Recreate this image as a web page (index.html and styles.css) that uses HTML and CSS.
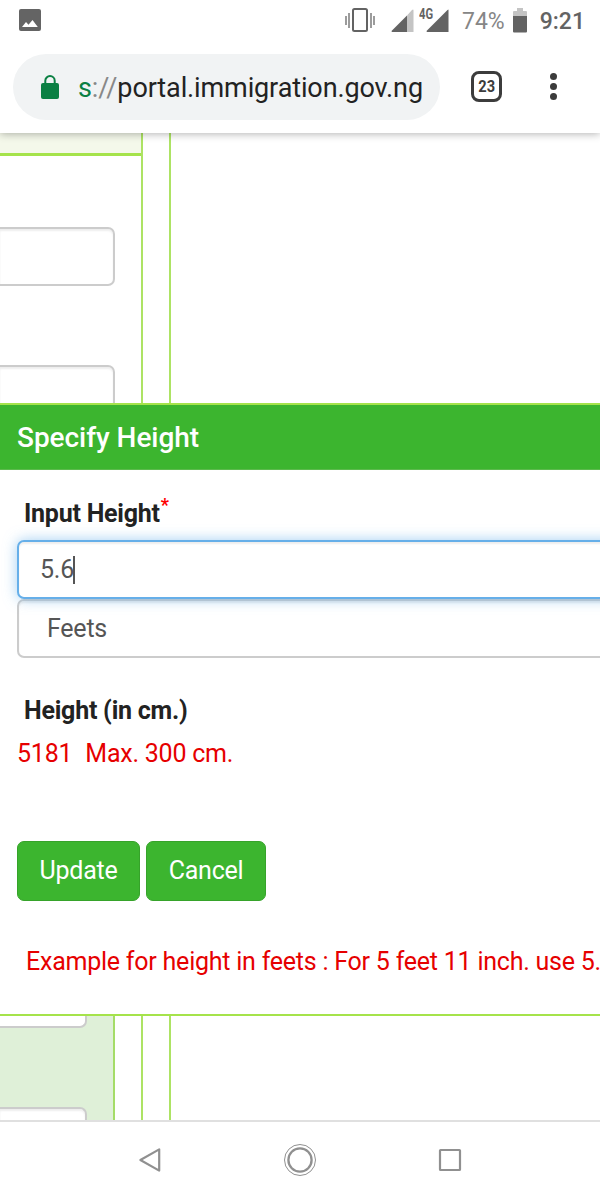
FILE: index.html
```html
<!DOCTYPE html>
<html lang="en">

<head>
    <meta charset="UTF-8">
    <meta name="viewport" content="width=device-width, initial-scale=1.0">
    <title>Specify Height</title>
    <link rel="stylesheet" href="styles.css">
</head>

<body>
    <div class="status-bar">
        <svg class="icon-picture" width="22" height="22" viewBox="0 0 22 22">
            <rect width="22" height="22" rx="2" fill="#646464" />
            <path d="M3 18L7 13L9.5 15.7L13.5 11L18.8 18Z" fill="#fff" />
        </svg>
        <svg class="icon-vibrate" width="30" height="26" viewBox="0 0 30 26">
            <rect x="8" y="2" width="14" height="22" rx="1.5" fill="none" stroke="#636363" stroke-width="2" />
            <path d="M1 9V18M4 6V21M26 6V21M29 9V18" stroke="#737373" stroke-width="1.4" />
        </svg>
        <svg class="icon-signal" width="23" height="23" viewBox="0 0 23 23">
            <path d="M16 6.5L21 1Q22.5 0 22.5 1.5V23H16Z" fill="#c4c4c4" />
            <path d="M16 6.5V23H1Q0 22.5 1 21.5Z" fill="#636363" />
        </svg>
        <span class="network">4G</span>
        <svg class="icon-signal-full" width="23" height="23" viewBox="0 0 23 23">
            <path d="M22.5 1Q22.5 0 21.5 1L1 21.5Q0 22.5 1 23H22.5Z" fill="#636363" />
        </svg>
        <span class="percent">74%</span>
        <svg class="icon-battery" width="14" height="25" viewBox="0 0 14 25">
            <path d="M0 9V4Q0 3 1 3H4V0H10V3H13Q14 3 14 4V9Z" fill="#c4c4c4" />
            <path d="M0 8H14V23.5Q14 24.5 13 24.5H1Q0 24.5 0 23.5Z" fill="#636363" />
        </svg>
        <span class="clock">9:21</span>
    </div>

    <div class="toolbar">
        <div class="url-box">
            <svg class="icon-lock" width="18" height="24" viewBox="0 0 18 24">
                <path d="M4.3 10V5.8A4.7 4.7 0 0 1 13.7 5.8V10" fill="none" stroke="#0b8043" stroke-width="2" />
                <rect y="8" width="18" height="16" rx="2" fill="#0b8043" />
            </svg>
            <div class="url"><span class="scheme">s</span><span class="slashes">://</span>portal.immigration.gov.ng</div>
        </div>
        <div class="tabs"><span>23</span></div>
        <div class="more"><i></i><i></i><i></i></div>
    </div>

    <div class="page">
        <div class="back-top">
            <div class="form-col">
                <div class="form-head"></div>
                <div class="field"></div>
                <div class="field"></div>
            </div>
            <div class="gutter"></div>
        </div>

        <div class="modal">
            <div class="modal-title">Specify Height</div>
            <div class="modal-body">
                <label class="label">Input Height<span class="star">*</span></label>
                <div class="input focus">5.6<span class="caret"></span></div>
                <div class="input select">Feets</div>
                <label class="label label-cm">Height (in cm.)</label>
                <div class="result"><span>5181</span><span>Max. 300 cm.</span></div>
                <div class="btn-box">
                    <button class="btn-update">Update</button>
                    <button class="btn-cancel">Cancel</button>
                </div>
                <p class="example">Example for height in feets : For 5 feet 11 inch. use 5.</p>
            </div>
        </div>

        <div class="back-bottom">
            <div class="green-col">
                <div class="field field-end"></div>
                <div class="field field-start"></div>
            </div>
            <div class="gutter"></div>
            <div class="gutter"></div>
        </div>
    </div>

    <div class="nav-bar">
        <svg width="28" height="28" viewBox="0 0 28 28">
            <path d="M4.4 14L23.2 3.4V24.6Z" fill="none" stroke="#909090" stroke-width="2.2" stroke-linejoin="round" />
        </svg>
        <svg width="34" height="34" viewBox="0 0 34 34">
            <circle cx="17" cy="17" r="15.5" fill="none" stroke="#909090" stroke-width="1" />
            <circle cx="17" cy="17" r="11.6" fill="none" stroke="#909090" stroke-width="2.3" />
        </svg>
        <svg width="28" height="28" viewBox="0 0 28 28">
            <rect x="4" y="4" width="20" height="20" rx=".6" fill="none" stroke="#909090" stroke-width="2.2" />
        </svg>
    </div>
</body>

</html>
```
FILE: styles.css
```css
* {
    box-sizing: border-box;
}

body {
    margin: 0;
    width: 600px;
    height: 1200px;
    overflow: hidden;
    background: #fff;
    font-family: Roboto, "Liberation Sans", sans-serif;
    color: #222;
}

svg {
    display: block;
    flex-shrink: 0;
}

/* status bar */
.status-bar {
    position: relative;
    z-index: 2;
    display: flex;
    height: 41px;
    padding: 8px 15px 0 19px;
    background: #fff;
    color: #636363;
}

.icon-picture {
    margin-top: 1px;
}

.icon-vibrate {
    margin-left: 304px;
    margin-top: -1px;
}

.icon-signal {
    margin-left: 16px;
    margin-top: 1px;
}

.network {
    width: 16px;
    margin-left: 5px;
    font-size: 14px;
    line-height: 12px;
    font-weight: 700;
    transform: scaleX(.8);
    transform-origin: 0 0;
}

.icon-signal-full {
    margin-left: -9px;
    margin-top: 1px;
}

.percent,
.clock {
    font-size: 23px;
    line-height: 27px;
    white-space: nowrap;
}

.percent {
    width: 44px;
    margin-left: 13px;
    color: #868686;
}

.icon-battery {
    margin-left: 8px;
}

.clock {
    margin-left: 13px;
    font-weight: 500;
}

/* address bar */
.toolbar {
    position: relative;
    display: flex;
    align-items: center;
    height: 92px;
    padding: 0 42px 0 13px;
    background: #fff;
    box-shadow: 0 1px 8px rgba(0, 0, 0, .3);
}

.url-box {
    display: flex;
    align-items: center;
    width: 427px;
    height: 66px;
    padding-left: 28px;
    border-radius: 33px;
    background: #f1f3f4;
}

.icon-lock {
    margin-top: -1px;
}

.url {
    margin-left: 19px;
    margin-top: 2px;
    font-size: 27px;
    letter-spacing: -.12px;
    white-space: nowrap;
}

.scheme {
    color: #0b8043;
}

.slashes {
    color: #888;
}

.tabs {
    display: flex;
    justify-content: center;
    width: 31px;
    height: 31px;
    margin-left: 31px;
    margin-top: -1px;
    border: 3px solid #3c3c3c;
    border-radius: 8px;
    font-size: 17px;
    line-height: 25px;
    font-weight: 700;
    color: #3c3c3c;
}

.tabs span {
    transform: scaleX(.86);
}

.more {
    display: flex;
    flex-direction: column;
    gap: 3px;
    margin-left: 48px;
    margin-top: -1px;
}

.more i {
    width: 7px;
    height: 7px;
    border-radius: 50%;
    background: #3c3c3c;
}

/* page behind the popup */
.page {
    height: 987px;
    overflow: hidden;
}

.back-top {
    display: flex;
    height: 270px;
    overflow: hidden;
}

.form-col {
    width: 143px;
    border-right: 2px solid #ade364;
}

.form-head {
    height: 23px;
    margin-bottom: 71px;
    border-bottom: 3px solid #a5e34b;
    background: #f4f8ea;
}

.field {
    width: 115px;
    height: 59px;
    margin-bottom: 79px;
    border: 2px solid #ccc;
    border-left: 0;
    border-radius: 0 7px 7px 0;
    background: #fff;
    box-shadow: inset 0 2px 2px rgba(0, 0, 0, .07);
}

.gutter {
    width: 28px;
    border-right: 2px solid #ade364;
}

.back-bottom {
    display: flex;
    height: 104px;
}

.green-col {
    display: flex;
    flex-direction: column;
    justify-content: space-between;
    width: 115px;
    border-right: 2px solid #a5dc68;
    background: #dff0d8;
}

.green-col .field {
    width: 87px;
    margin: 0;
}

.green-col .field-end {
    height: 12px;
    border-top: 0;
    border-radius: 0 0 7px 0;
    box-shadow: none;
}

.green-col .field-start {
    height: 13px;
    border-bottom: 0;
    border-radius: 0 7px 0 0;
}

/* popup */
.modal {
    height: 613px;
    border-top: 2px solid #a5e34b;
    border-bottom: 2px solid #a5e34b;
    background: #fff;
}

.modal-title {
    height: 65px;
    padding-left: 17px;
    border-bottom: 1px solid #5cba4d;
    background: #3cb52f;
    color: #fff;
    font-size: 28px;
    letter-spacing: -.05px;
    line-height: 65px;
    font-weight: 500;
}

.modal-body {
    padding: 27px 0 0 17px;
    font-size: 25px;
    letter-spacing: -.23px;
}

.label {
    display: block;
    height: 43px;
    padding-left: 7px;
    line-height: 34px;
    font-weight: 700;
}

.star {
    position: relative;
    top: -11px;
    left: 1px;
    font-size: 18px;
    line-height: 0;
    color: #f00;
}

.input {
    display: flex;
    align-items: center;
    width: 620px;
    height: 59px;
    padding-left: 21px;
    border: 2px solid #ccc;
    border-radius: 7px;
    background: #fff;
    color: #555;
    box-shadow: inset 0 2px 2px rgba(0, 0, 0, .07);
}

.focus {
    position: relative;
    border-color: #66afe9;
    box-shadow: inset 0 2px 2px rgba(0, 0, 0, .07), 0 0 14px rgba(102, 175, 233, .6);
}

.caret {
    width: 2px;
    height: 28px;
    margin-left: -1px;
    background: #555;
}

.select {
    padding-left: 28px;
}

.label-cm {
    margin-top: 36px;
}

.result {
    display: flex;
    gap: 13px;
    height: 32px;
    line-height: 34px;
    color: #e60000;
}

.btn-box {
    display: flex;
    gap: 6px;
    margin-top: 72px;
}

button {
    height: 60px;
    padding: 0 0 2px;
    border: 1px solid #36a32a;
    border-radius: 7px;
    background: #3cb52f;
    color: #fff;
    font-family: inherit;
    font-size: 25px;
    letter-spacing: -.23px;
}

.btn-update {
    width: 123px;
}

.btn-cancel {
    width: 120px;
}

.example {
    margin: 44px 0 0 9px;
    line-height: 34px;
    white-space: nowrap;
    color: #e60000;
}

/* android navigation */
.nav-bar {
    display: flex;
    align-items: center;
    justify-content: center;
    gap: 119px;
    height: 80px;
    padding-bottom: 2px;
    border-top: 2px solid #e0e0e0;
    background: #fff;
}
```
